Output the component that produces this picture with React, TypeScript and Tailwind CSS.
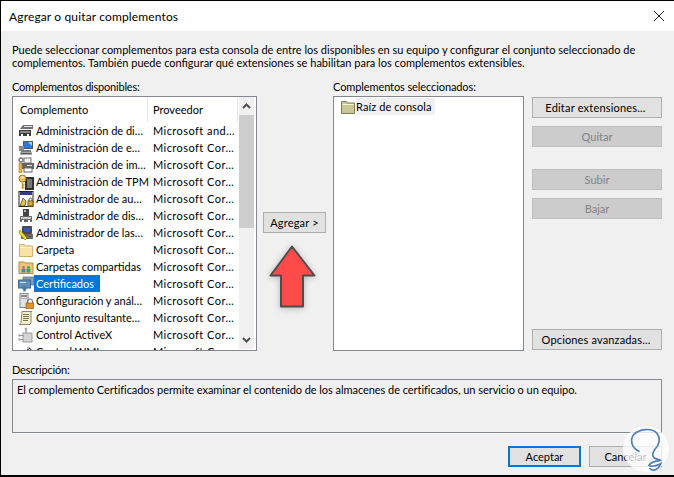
import React from "react";

const Folder = ({ c = "#f8e2a4", d = "#cdb06a" }: { c?: string; d?: string }) => (
  <svg width="16" height="16" viewBox="0 0 16 16" className="shrink-0">
    <path d="M1.500 2.500h5l1 1.500h7v10.500h-13z" fill={c} stroke={d} />
    <path d="M2.500 5.500h11" stroke="#fff3c8" />
  </svg>
);

const icons: React.ReactNode[] = [
  <svg key="0" width="16" height="16" viewBox="0 0 16 16"><path d="M2 6h13V2H5z" fill="#6f6f6f" /><path d="M6 3h8v1H6z" fill="#e8e8e8" /><rect x="1" y="7" width="12" height="6" fill="#3c3c3c" /><rect x="2" y="8" width="10" height="2" fill="#8a8a8a" /><rect x="3" y="11" width="2" height="3" fill="#fff" /><rect x="9" y="11" width="2" height="3" fill="#fff" /></svg>,
  <svg key="1" width="16" height="16" viewBox="0 0 16 16"><rect x="5" y="1" width="10" height="8" fill="#555" /><rect x="6" y="2" width="8" height="6" fill="#2a78d8" /><path d="M10 2h4v4z" fill="#9fd0ff" /><rect x="1" y="6" width="5" height="5" fill="#8c8c8c" /><rect x="3" y="10" width="10" height="2" fill="#6b7f8f" /><rect x="2" y="12" width="12" height="3" fill="#a9a9a9" /><path d="M3 13h10v1H3z" fill="#555" /></svg>,
  <svg key="2" width="16" height="16" viewBox="0 0 16 16"><rect x="6" y="1" width="7" height="5" fill="#f4f4f4" stroke="#777" /><rect x="4" y="6" width="12" height="6" fill="#666" /><rect x="6" y="11" width="8" height="4" fill="#fff" stroke="#666" /><rect x="9" y="8" width="5" height="1" fill="#dfe8f0" /><rect x="1" y="6" width="3" height="10" fill="#e5b546" stroke="#a87b1f" strokeWidth=".6" /><circle cx="3" cy="3" r="2" fill="none" stroke="#777" strokeWidth="1.400" /></svg>,
  <svg key="3" width="16" height="16" viewBox="0 0 16 16"><rect x="7" y="3" width="9" height="13" fill="#303030" /><rect x="9" y="5" width="5" height="9" fill="#777" /><circle cx="4.500" cy="4.500" r="3.500" fill="#efc055" stroke="#a87b1f" /><circle cx="4.500" cy="3.500" r="1" fill="#fff" /><path d="M4.500 8v7M4.500 11h2M4.500 13.500h2" stroke="#c8922e" strokeWidth="1.600" /></svg>,
  <svg key="4" width="16" height="16" viewBox="0 0 16 16"><rect x="1" y="0.500" width="14" height="15" fill="#fff" stroke="#222" /><rect x="2" y="1" width="12" height="3" fill="#3a3a8c" /><path d="M2 15l3-8 3 3-1 5z" fill="#e7c63a" stroke="#333" strokeWidth=".7" /><rect x="10" y="10" width="5" height="5" fill="#e0a93a" stroke="#7a5c18" /><path d="M11 10V8.500a1.500 1.500 0 0 1 3 0V10" fill="none" stroke="#555" /></svg>,
  <svg key="5" width="16" height="16" viewBox="0 0 16 16"><rect x="5" y="1" width="6" height="7" fill="#444" /><rect x="6" y="2" width="2" height="2" fill="#bbb" /><rect x="2" y="8" width="12" height="6" rx="1" fill="#666" /><rect x="3" y="9" width="10" height="2" fill="#ccc" /><rect x="4" y="12" width="2" height="3" fill="#fff" /><rect x="10" y="12" width="2" height="3" fill="#fff" /></svg>,
  <svg key="6" width="16" height="16" viewBox="0 0 16 16"><rect x="4" y="1" width="10" height="8" rx="1" fill="#4a4a4a" /><rect x="6" y="3" width="6" height="4" fill="#2f57c0" /><rect x="3" y="9" width="12" height="5" rx="1" fill="#666" /><path d="M2 5l7 8-2 2L1 8z" fill="#f7e11e" stroke="#7d7000" strokeWidth=".6" /></svg>,
  <Folder key="7" />,
  <svg key="8" width="16" height="16" viewBox="0 0 16 16"><path d="M1 3h5l1 1h8v10.500H1z" fill="#e8c878" stroke="#b08c44" /><circle cx="5.500" cy="8.500" r="1.500" fill="#d66" /><rect x="3.500" y="10" width="4" height="3.500" fill="#5b7fc0" /><circle cx="10.500" cy="8.500" r="1.500" fill="#4a4" /><rect x="8.500" y="10" width="4" height="3.500" fill="#3f9f6f" /></svg>,
  <svg key="9" width="16" height="16" viewBox="0 0 16 16"><rect x="5" y="1" width="11" height="8" fill="#7d9dbd" stroke="#5a7793" strokeWidth=".7" /><rect x="0.500" y="4" width="12" height="8" fill="#5f8fb8" stroke="#41688a" /><rect x="2" y="6" width="6" height="1" fill="#cfe0ee" /><circle cx="6.500" cy="12" r="2.200" fill="#4d7a9d" /><path d="M5.500 13.500V16l1-1 1 1v-2.500" fill="#2f6fb0" /></svg>,
  <svg key="10" width="16" height="16" viewBox="0 0 16 16"><rect x="2" y="0.500" width="8" height="14" fill="#e4e4e4" stroke="#888" /><rect x="3" y="2" width="6" height="2" fill="#888" /><rect x="3" y="5" width="6" height="1" fill="#aaa" /><rect x="8" y="10" width="8" height="6" fill="#e0912f" stroke="#94591a" strokeWidth=".7" /><path d="M9.500 10V8.500a2.500 2.500 0 0 1 5 0V10" fill="none" stroke="#777" strokeWidth="1.200" /></svg>,
  <svg key="11" width="16" height="16" viewBox="0 0 16 16"><path d="M4 1.500h10l-1 1v10l-1 2H1.500l1.500-2z" fill="#f6eecb" stroke="#8a8560" /><path d="M5 4.500h6M5 6.500h6M5 8.500h6M5 10.500h5" stroke="#77735a" /></svg>,
  <svg key="12" width="16" height="16" viewBox="0 0 16 16"><path d="M8 2v4M1 8.500h4M1 12.500h4" stroke="#888" strokeWidth="1.200" /><circle cx="8" cy="2" r="1.500" fill="#aaa" /><circle cx="1.500" cy="8.500" r="1.200" fill="#aaa" /><circle cx="1.500" cy="12.500" r="1.200" fill="#aaa" /><rect x="5" y="6" width="9" height="9" fill="#d4d4d4" stroke="#9a9a9a" /></svg>,
  <svg key="13" width="16" height="16" viewBox="0 0 16 16"><path d="M2 8h5l4-5 3 3-4 4H2z" fill="#555" /><path d="M9 3l4 4" stroke="#bbb" /></svg>,
];

const rows = [
  ["Administración de di…", "Microsoft and…"],
  ["Administración de e…", "Microsoft Cor…"],
  ["Administración de im…", "Microsoft Cor…"],
  ["Administración de TPM", "Microsoft Cor…"],
  ["Administrador de au…", "Microsoft Cor…"],
  ["Administrador de dis…", "Microsoft Cor…"],
  ["Administrador de las…", "Microsoft Cor…"],
  ["Carpeta", "Microsoft Cor…"],
  ["Carpetas compartidas", "Microsoft Cor…"],
  ["Certificados", "Microsoft Cor…"],
  ["Configuración y anál…", "Microsoft Cor…"],
  ["Conjunto resultante…", "Microsoft Cor…"],
  ["Control ActiveX", "Microsoft Cor…"],
  ["Control WMI", "Microsoft Cor…"],
];

const Btn = ({ children, disabled, className = "" }: { children: React.ReactNode; disabled?: boolean; className?: string }) => (
  <div
    className={`h-[21px] flex items-center justify-center border ${
      disabled ? "bg-[#cccccc] border-[#bfbfbf] text-[#838383]" : "bg-[#e1e1e1] border-[#adadad] text-[#000]"
    } ${className}`}
  >
    {children}
  </div>
);

export default function App() {
  return (
    <div
      className="relative w-[674px] h-[477px] overflow-hidden flex flex-col bg-[#f0f0f0] border-t border-l border-b-2 border-black text-[11px] leading-[13px] text-[#000]"
      style={{ fontFamily: 'Lato, "Noto Sans", sans-serif' }}
    >
      <div className="h-[30px] shrink-0 bg-white flex items-center justify-between pl-[8px] pr-[9px]">
        <span className="text-[12px] tracking-[0.14px]">Agregar o quitar complementos</span>
        <svg width="12" height="12" viewBox="0 0 12 12"><path d="M1 1l10 10M11 1L1 11" stroke="#222" strokeWidth="1" /></svg>
      </div>

      <div className="pt-[12px] pl-[11px] pr-[11px]">
        <p className="w-[640px] whitespace-nowrap">
          Puede seleccionar complementos para esta consola de entre los disponibles en su equipo y configurar el conjunto seleccionado de
          <br />
          complementos. También puede configurar qué extensiones se habilitan para los complementos extensibles.
        </p>

        <div className="mt-[11px] flex">
          <div className="w-[245px]">
            <div className="h-[16px] tracking-[-0.2px]">Complementos disponibles:</div>
            <div className="h-[255px] bg-white border border-[#828790] flex overflow-hidden">
              <div className="w-[226px] shrink-0 pl-[5px]">
                <div className="h-[25px] flex items-center">
                  <div className="w-[130px] h-[24px] flex items-center pl-[2px] border-r border-[#e5e5e5]">Complemento</div>
                  <div className="w-[90px] h-[24px] flex items-center pl-[5px] border-r border-[#e5e5e5]">Proveedor</div>
                </div>
                {rows.map(([a, b], i) => (
                  <div key={a} className="h-[17px] flex items-center whitespace-nowrap">
                    <div className="w-[16px] h-[16px] shrink-0">{icons[i]}</div>
                    <div className="w-[119px] shrink-0 overflow-hidden">
                      <span className={`inline-block h-[17px] leading-[17px] pl-[2px] pr-[6px] ${i === 9 ? "bg-[#0078d7] text-white" : ""}`}>{a}</span>
                    </div>
                    <div className="tracking-[0.45px]">{b}</div>
                  </div>
                ))}
              </div>
              <div className="w-[15px] mb-[1px] flex flex-col bg-[#f0f0f0]">
                <div className="h-[18px] w-full flex items-center justify-center">
                  <svg width="9" height="6" viewBox="0 0 9 6"><path d="M1 5l3.500-3.500L8 5" fill="none" stroke="#505050" strokeWidth="2" /></svg>
                </div>
                <div className="h-[113px] w-[15px] bg-[#cdcdcd]" />
                <div className="flex-1" />
                <div className="h-[18px] w-full flex items-center justify-center">
                  <svg width="9" height="6" viewBox="0 0 9 6"><path d="M1 1l3.500 3.500L8 1" fill="none" stroke="#505050" strokeWidth="2" /></svg>
                </div>
              </div>
            </div>
          </div>

          <div className="w-[76px] pl-[6px] pt-[132px]">
            <Btn className="w-[63px] tracking-[0.2px]">Agregar &gt;</Btn>
            <svg width="60" height="72" viewBox="0 0 60 72" className="mt-[10px] ml-[6px] drop-shadow-[0_1px_3px_rgba(0,0,0,0.25)]">
              <path d="M23 3.500L1.500 32.500H12V63.500H34V32.500H45.500z" fill="#ff4a4a" stroke="#4d4d4d" strokeWidth="2" strokeLinejoin="round" />
            </svg>
          </div>

          <div className="w-[191px]">
            <div className="h-[16px] tracking-[-0.1px]">Complementos seleccionados:</div>
            <div className="h-[255px] bg-white border border-[#828790] pl-[6px] pt-[1px]">
              <div className="flex items-center h-[17px]">
                <Folder c="#c9c79a" d="#7d7d5c" />
                <span className="bg-[#f0f0f0] h-[17px] leading-[17px] pr-[3px] tracking-[0.1px]">Raíz de consola</span>
              </div>
            </div>
          </div>

          <div className="w-[130px] ml-[8px] pt-[16px] h-[271px] flex flex-col">
            <Btn className="mt-[1px] tracking-[0.2px] pr-[3px]">Editar extensiones...</Btn>
            <Btn disabled className="mt-[8px]">Quitar</Btn>
            <Btn disabled className="mt-[22px]">Subir</Btn>
            <Btn disabled className="mt-[8px]">Bajar</Btn>
            <Btn className="mt-auto mb-[1px] tracking-[0.15px] pr-[2px]">Opciones avanzadas...</Btn>
          </div>
        </div>

        <div className="mt-[12px] h-[16px] tracking-[-0.2px]">Descripción:</div>
        <div className="h-[54px] w-[650px] border border-[#828790] shadow-[0_1px_0_#fff] pl-[4px] pt-[3px] whitespace-nowrap tracking-[-0.05px]">
          El complemento Certificados permite examinar el contenido de los almacenes de certificados, un servicio o un equipo.
        </div>

        <div className="mt-[13px] w-[650px] flex justify-end gap-[8px]">
          <Btn className="w-[73px] !border-2 !border-[#0078d7]">Aceptar</Btn>
          <Btn className="w-[73px]">Cancelar</Btn>
        </div>
      </div>

      <svg width="60" height="60" viewBox="0 0 180 180" className="absolute left-[613px] top-[416px]">
        <circle cx="96" cy="96" r="69" fill="#ffffff" fillOpacity="0.75" />
        <path
          d="M75 103C55 95 45 70 60 52C75 38 110 30 128 48C142 65 135 85 122 98C115 108 115 118 122 124C130 128 140 128 140 130C125 132 108 138 105 145C115 152 130 145 140 140C135 155 120 165 108 155"
          fill="none"
          stroke="#4d7fb5"
          strokeWidth="5"
          strokeLinecap="round"
        />
      </svg>
    </div>
  );
}
